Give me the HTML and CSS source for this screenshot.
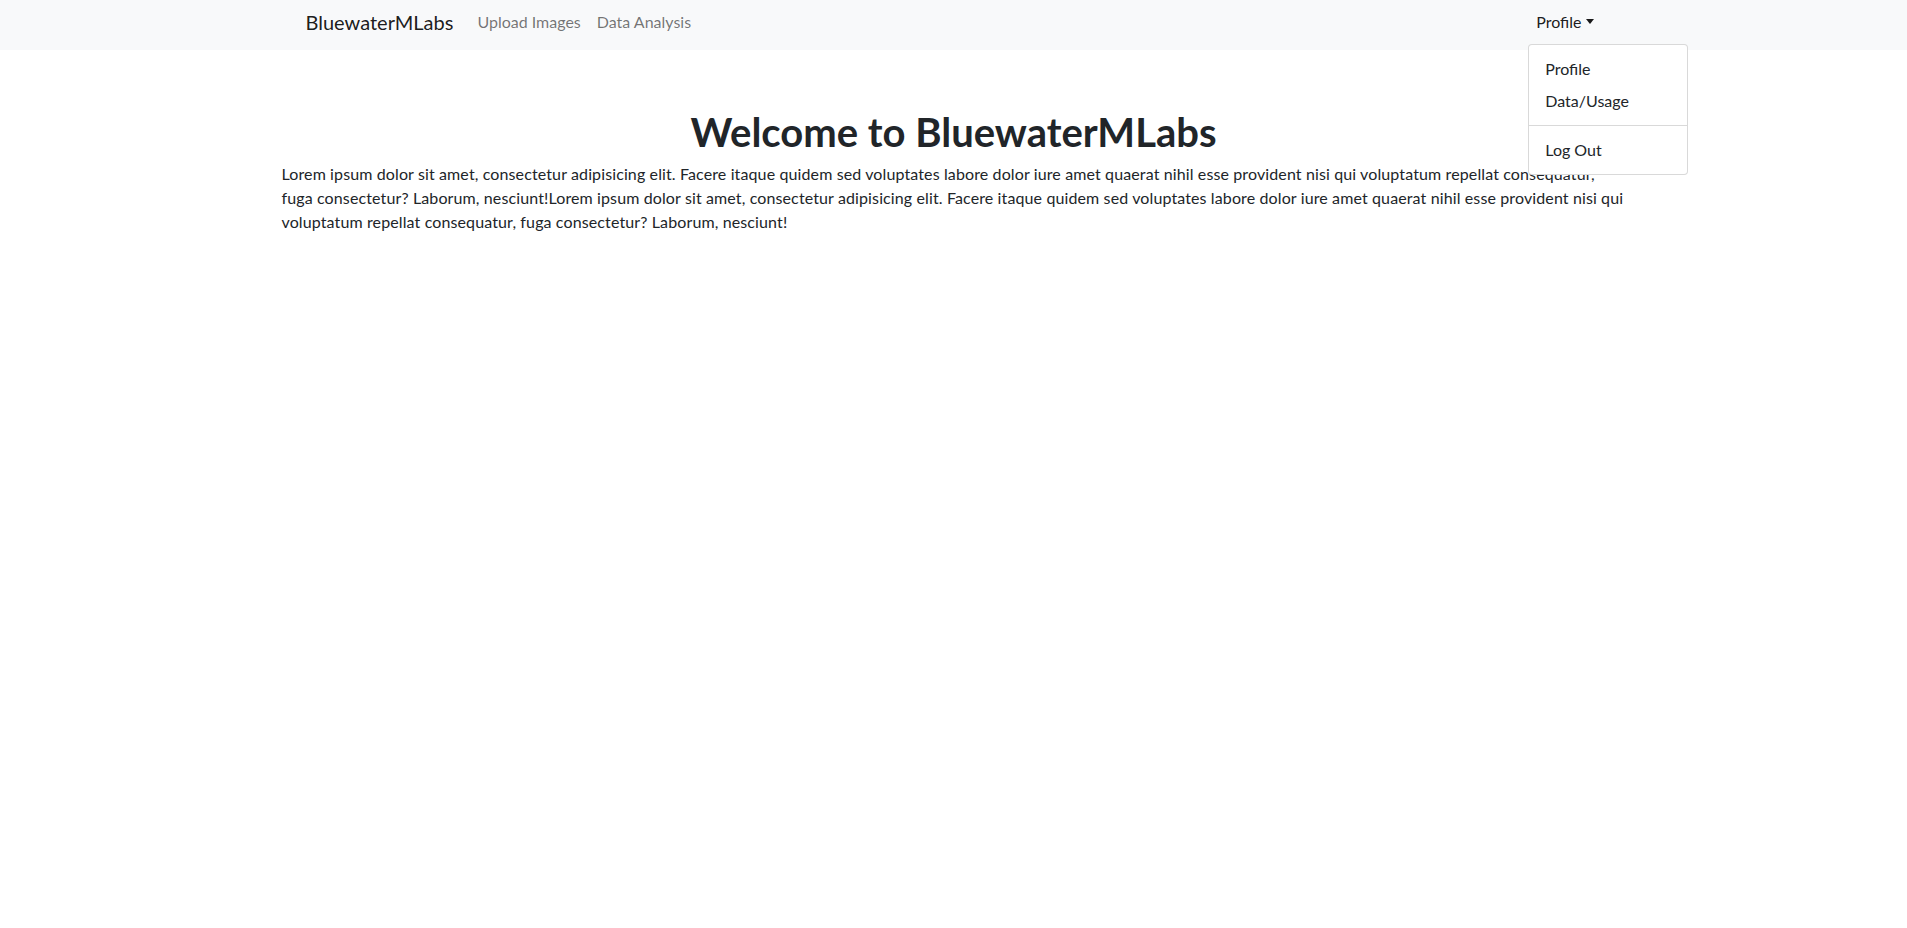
FILE: index.html
```html
<!DOCTYPE html>
<html lang="en">
<head>
<meta charset="utf-8">
<title>BluewaterMLabs</title>
<link rel="stylesheet" href="styles.css">
</head>
<body>
<nav class="navbar">
  <div class="container nav-inner">
    <a class="brand" href="#">BluewaterMLabs</a>
    <ul class="nav-list">
      <li><a class="nav-link" href="#">Upload Images</a></li>
      <li><a class="nav-link" href="#">Data Analysis</a></li>
    </ul>
    <ul class="nav-list nav-right">
      <li class="dropdown">
        <a class="nav-link toggle" href="#">Profile<span class="caret"></span></a>
        <ul class="dropdown-menu">
          <li><a class="dropdown-item" href="#">Profile</a></li>
          <li><a class="dropdown-item" href="#">Data/Usage</a></li>
          <li><hr class="dropdown-divider"></li>
          <li><a class="dropdown-item" href="#">Log Out</a></li>
        </ul>
      </li>
    </ul>
  </div>
</nav>
<main class="main">
  <h1 class="title">Welcome to BluewaterMLabs</h1>
  <p class="lead-text">Lorem ipsum dolor sit amet, consectetur adipisicing elit. Facere itaque quidem sed voluptates labore dolor iure amet quaerat nihil esse provident nisi qui voluptatum repellat consequatur, fuga consectetur? Laborum, nesciunt!Lorem ipsum dolor sit amet, consectetur adipisicing elit. Facere itaque quidem sed voluptates labore dolor iure amet quaerat nihil esse provident nisi qui voluptatum repellat consequatur, fuga consectetur? Laborum, nesciunt!</p>
</main>
</body>
</html>
```

FILE: styles.css
```css
* { box-sizing: border-box; }
html, body { margin: 0; padding: 0; }
body {
  font-family: "Lato", "Noto Sans", sans-serif;
  font-size: 16px;
  line-height: 1.5;
  color: #212529;
  background: #fff;
}
a { text-decoration: none; }
.container {
  width: 1320px;
  margin: 0 auto;
  padding: 0 12px;
}
.navbar {
  background: #f8f9fa;
  height: 50px;
}
.nav-inner {
  display: flex;
  align-items: center;
  height: 50px;
  padding-bottom: 6px;
}
.brand {
  font-size: 20px;
  line-height: 30px;
  color: rgba(0,0,0,.9);
  margin-right: 16px;
}
.nav-list {
  list-style: none;
  margin: 0;
  padding: 0;
  display: flex;
}
.nav-right {
  margin-left: auto;
  margin-right: 0;
}
.nav-link {
  display: block;
  padding: 8px;
  line-height: 24px;
  color: rgba(0,0,0,.55);
}
.toggle { color: rgba(0,0,0,.9); }
.caret {
  display: inline-block;
  margin-left: 4px;
  vertical-align: 4px;
  border-top: 5px solid;
  border-left: 4px solid transparent;
  border-right: 4px solid transparent;
}
.dropdown { position: relative; }
.dropdown-menu {
  position: absolute;
  top: 42px;
  left: 0;
  width: 160px;
  margin: 0;
  padding: 8px 0;
  list-style: none;
  background: #fff;
  border: 1px solid rgba(0,0,0,.15);
  border-radius: 4px;
  z-index: 10;
}
.dropdown-item {
  display: block;
  padding: 4px 16px;
  line-height: 24px;
  color: #212529;
  white-space: nowrap;
}
.dropdown-divider {
  height: 0;
  margin: 8px 0;
  border: 0;
  border-top: 1px solid rgba(0,0,0,.15);
}
.main {
  width: 1344px;
  margin: 0 auto;
}
.title {
  margin: 58px 0 6px;
  text-align: center;
  font-size: 40px;
  font-weight: 700;
  line-height: 1.2;
}
.lead-text {
  margin: 0 0 16px;
  letter-spacing: 0.12px;
  line-height: 23.8px;
}
```
